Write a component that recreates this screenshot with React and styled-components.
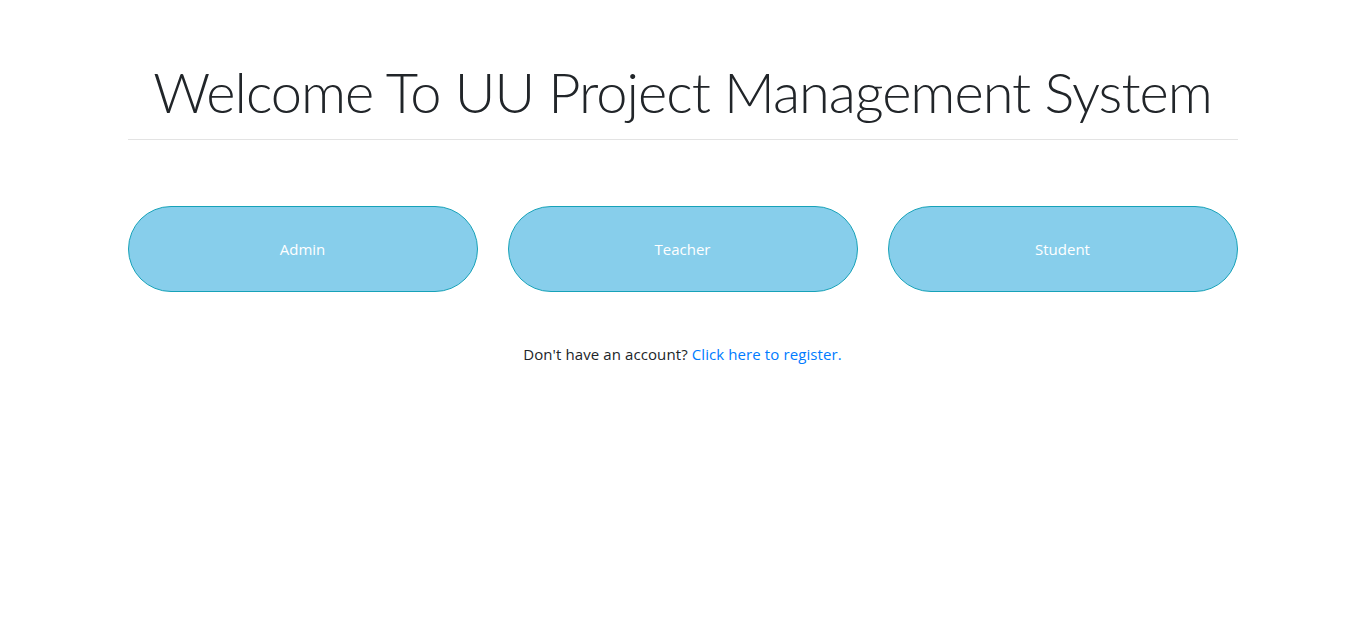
import React from 'react'
import styled, { createGlobalStyle } from 'styled-components'

const Global = createGlobalStyle`
  body {
    margin: 0;
    background: #fff;
    font-family: "Open Sans", "Noto Sans", sans-serif;
    color: #212529;
  }
`

const Container = styled.div`
  width: 1110px;
  margin: 0 auto;
  padding-top: 58px;
`

const Title = styled.h1`
  margin: 0;
  font-family: Lato, "Open Sans", sans-serif;
  font-size: 56px;
  font-weight: 300;
  line-height: 1.2;
  letter-spacing: -1px;
  text-align: center;
  white-space: nowrap;
  color: #212529;
`

const Rule = styled.hr`
  margin: 14px 0 0;
  border: 0;
  border-top: 1px solid #e3e3e3;
`

const ButtonRow = styled.div`
  display: grid;
  grid-template-columns: repeat(3, 1fr);
  gap: 30px;
  margin-top: 66px;
`

const RoleButton = styled.button`
  height: 86px;
  border-radius: 43px;
  background: #87ceeb;
  border: 1px solid #17a2b8;
  color: #fff;
  font-family: "Open Sans", "Noto Sans", sans-serif;
  font-size: 15px;
  cursor: pointer;
`

const Footer = styled.p`
  margin: 50px 0 0;
  text-align: center;
  font-size: 15px;
  letter-spacing: 0.1px;
  line-height: 24px;
`

const Link = styled.a`
  color: #007bff;
  text-decoration: none;
`

const roles = ['Admin', 'Teacher', 'Student']

const App = () => {
  return (
    <>
      <Global />
      <Container>
        <Title>Welcome To UU Project Management System</Title>
        <Rule />
        <ButtonRow>
          {roles.map(r => (
            <RoleButton key={r}>{r}</RoleButton>
          ))}
        </ButtonRow>
        <Footer>
          Don't have an account? <Link href="#">Click here to register.</Link>
        </Footer>
      </Container>
    </>
  )
}

export default App
